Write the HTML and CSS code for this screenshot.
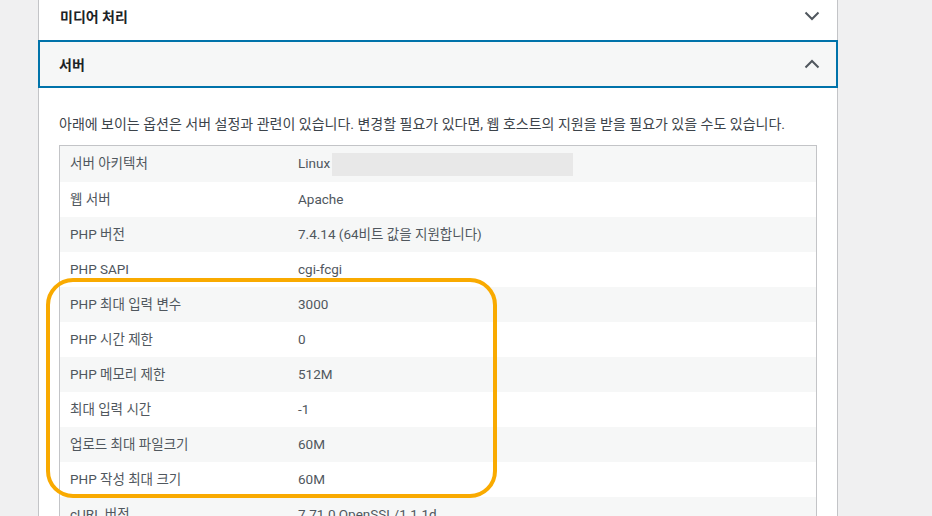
FILE: index.html
```html
<!DOCTYPE html>
<html lang="ko">
<head>
  <meta charset="UTF-8" />
  <title>사이트 건강 정보 - 서버</title>
  <link rel="stylesheet" href="styles.css">
</head>
<body>
  <div class="panel">
    <div class="acc-head">
      <span class="acc-title">미디어 처리</span>
      <svg class="chev" width="16" height="10" viewBox="0 0 16 10"><polyline points="1.5,1.5 8,8 14.5,1.5" /></svg>
    </div>

    <div class="acc-head open">
      <span class="acc-title">서버</span>
      <svg class="chev" width="16" height="10" viewBox="0 0 16 10"><polyline points="1.5,8.5 8,2 14.5,8.5" /></svg>
    </div>

    <div class="acc-body">
      <p class="desc">아래에 보이는 옵션은 서버 설정과 관련이 있습니다. 변경할 필요가 있다면, 웹 호스트의 지원을 받을 필요가 있을 수도 있습니다.</p>

      <table class="info-table">
        <tbody>
          <tr><td class="label">서버 아키텍처</td><td>Linux<span class="redacted"></span></td></tr>
          <tr><td class="label">웹 서버</td><td>Apache</td></tr>
          <tr><td class="label">PHP 버전</td><td>7.4.14 (64비트 값을 지원합니다)</td></tr>
          <tr><td class="label">PHP SAPI</td><td>cgi-fcgi</td></tr>
          <tr><td class="label">PHP 최대 입력 변수</td><td>3000</td></tr>
          <tr><td class="label">PHP 시간 제한</td><td>0</td></tr>
          <tr><td class="label">PHP 메모리 제한</td><td>512M</td></tr>
          <tr><td class="label">최대 입력 시간</td><td>-1</td></tr>
          <tr><td class="label">업로드 최대 파일크기</td><td>60M</td></tr>
          <tr><td class="label">PHP 작성 최대 크기</td><td>60M</td></tr>
          <tr><td class="label">cURL 버전</td><td>7.71.0 OpenSSL/1.1.1d</td></tr>
        </tbody>
      </table>

      <div class="mark"></div>
    </div>
  </div>
</body>
</html>
```

FILE: styles.css
```css
body {
  margin: 0;
  background: #f0f0f1;
  font-family: Roboto, "Noto Sans CJK KR", sans-serif;
  color: #3c434a;
  height: 516px;
  overflow: hidden;
}

.panel {
  width: 800px;
  margin: -8px 0 0 38px;
  background: #fff;
}

.acc-head {
  height: 48px;
  box-sizing: border-box;
  display: flex;
  align-items: center;
  justify-content: space-between;
  padding: 0 17px 0 21px;
  border-left: 1px solid #c3c4c7;
  border-right: 1px solid #c3c4c7;
}

.acc-head.open {
  background: #f6f7f7;
  border: 2px solid #0073aa;
  padding: 0 16px 0 19px;
}

.acc-title {
  font-size: 14px;
  font-weight: 600;
  color: #1d2327;
}

.chev {
  fill: none;
  stroke: #50575e;
  stroke-width: 2;
}

.acc-body {
  position: relative;
  padding: 26px 20px 0 20px;
  border-left: 1px solid #c3c4c7;
  border-right: 1px solid #c3c4c7;
}

.desc {
  margin: 0 0 11px 0;
  font-size: 14px;
  line-height: 20px;
  color: #3c434a;
}

.info-table {
  width: 100%;
  border: 1px solid #c3c4c7;
  border-collapse: separate;
  border-spacing: 0;
  font-size: 13.5px;
}

.info-table td {
  padding: 8px 10px;
  line-height: 19px;
  color: #50575e;
  white-space: nowrap;
}

.info-table tr:nth-child(odd) td {
  background: #f6f7f7;
}

.info-table td.label {
  width: 208px;
}

.redacted {
  display: inline-block;
  width: 241px;
  height: 23px;
  margin: -2px 0 -2px 2px;
  vertical-align: middle;
  background: #e8e8e8;
}

.mark {
  position: absolute;
  left: 7px;
  top: 190px;
  width: 443px;
  height: 212px;
  border: 4px solid #f9aa00;
  border-radius: 27px;
}
```
